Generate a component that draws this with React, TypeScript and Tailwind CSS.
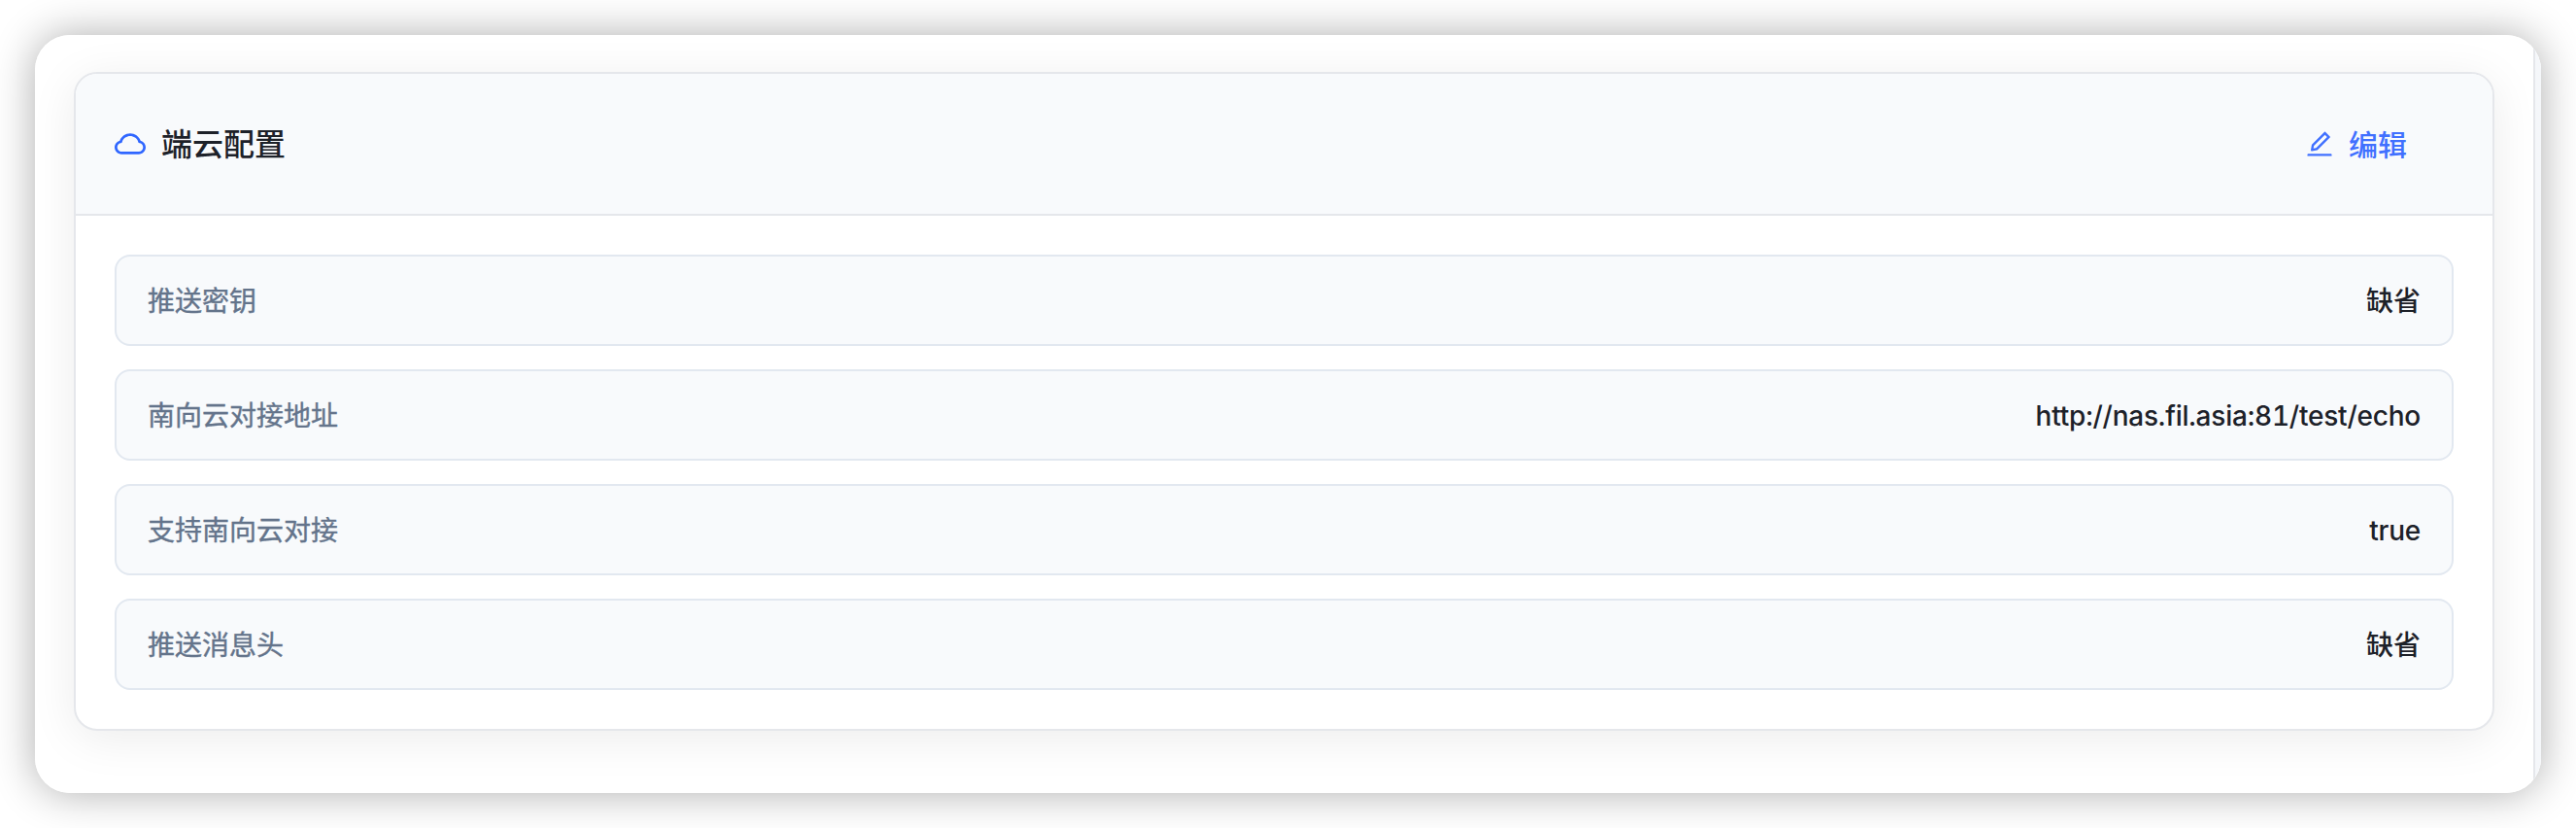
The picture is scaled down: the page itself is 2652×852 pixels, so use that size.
import { AiOutlineCloud, AiOutlineEdit } from "react-icons/ai";

const rows = [
  { label: "推送密钥", value: "缺省" },
  { label: "南向云对接地址", value: "http://nas.fil.asia:81/test/echo", latin: true },
  { label: "支持南向云对接", value: "true", latin: true },
  { label: "推送消息头", value: "缺省" },
];

export default function App() {
  return (
    <div className="h-[852px] w-[2652px] overflow-hidden bg-white p-9 font-['Inter','Noto_Sans_CJK_SC',sans-serif]">
      <div className="flex h-[780px] rounded-[36px] shadow-[0_0_44px_rgba(0,0,0,0.32)]">
        <main className="flex w-full overflow-hidden rounded-[36px] bg-white">
          <div className="flex-1 pt-[38px] pr-10 pl-10">
            <section className="rounded-3xl border-2 border-[#e5e7eb] bg-white shadow-[0_8px_48px_rgba(0,0,0,0.08)]">
              <header className="flex h-[146px] items-center justify-between rounded-t-[22px] border-b-2 border-[#e5e7eb] bg-[#f8fafc] px-10">
                <div className="flex items-center gap-4">
                  <AiOutlineCloud viewBox="64 64 896 896" className="size-8 text-[#2f66ff]" />
                  <h2 className="pt-0.5 text-[32px] leading-[48px] font-medium text-[#1d2129]">端云配置</h2>
                </div>
                <button className="flex items-center gap-4 pr-12 text-[#4070ff]">
                  <AiOutlineEdit viewBox="64 64 896 896" className="size-7" />
                  <span className="pt-px text-[30px] leading-[44px] font-medium">编辑</span>
                </button>
              </header>
              <dl className="flex flex-col gap-6 p-10">
                {rows.map((row) => (
                  <div
                    key={row.label}
                    className="flex h-[94px] items-center justify-between rounded-2xl border-2 border-[#e2e8f0] bg-[#f8fafc] px-8 text-[28px] leading-[42px]"
                  >
                    <dt className="pt-0.5 text-[#64748b] [-webkit-text-stroke:0.4px_#64748b]">{row.label}</dt>
                    <dd className={row.latin ? "pt-px font-medium tracking-[-0.22px] tabular-nums text-[#1d2129]" : "pt-0.5 font-medium text-[#1d2129]"}>
                      {row.value}
                    </dd>
                  </div>
                ))}
              </dl>
            </section>
          </div>
          <div className="w-2 border-l-2 border-[#e5e7eb] bg-[#f5f7fa]" />
        </main>
      </div>
    </div>
  );
}
